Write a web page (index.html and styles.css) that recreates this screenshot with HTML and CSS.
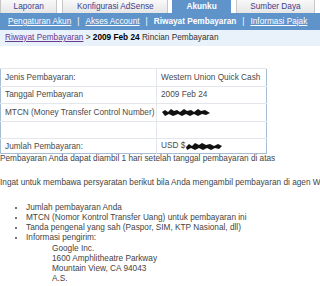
FILE: index.html
```html
<!DOCTYPE html>
<html lang="id">
<head>
    <meta charset="UTF-8">
    <meta name="viewport" content="width=device-width, initial-scale=1.0">
    <title>Rincian Pembayaran</title>
    <link rel="stylesheet" href="styles.css">
</head>
<body>
    <div class="tabs">
        <a href="#" class="tab tab-laporan">Laporan</a>
        <a href="#" class="tab tab-konfig">Konfigurasi AdSense</a>
        <a href="#" class="tab tab-akun active">Akunku</a>
        <a href="#" class="tab tab-sumber">Sumber Daya</a>
    </div>
    <div class="subnav">
        <a href="#">Pengaturan Akun</a><span class="sep">|</span>
        <a href="#">Akses Account</a><span class="sep">|</span>
        <b>Riwayat Pembayaran</b><span class="sep">|</span>
        <a href="#">Informasi Pajak</a>
    </div>
    <div class="crumb">
        <a href="#">Riwayat Pembayaran</a> &gt; <b>2009 Feb 24</b> Rincian Pembayaran
    </div>

    <div class="content">
        <table class="detail">
            <tr><td class="label">Jenis Pembayaran:</td><td>Western Union Quick Cash</td></tr>
            <tr><td class="label">Tanggal Pembayaran</td><td>2009 Feb 24</td></tr>
            <tr><td class="label">MTCN (Money Transfer Control Number)</td>
                <td><svg class="scribble" width="50" height="9" viewBox="0 0 50 9"><path d="M1 4 L4 2 L7 4 L10 1 L13 3 L16 2 L19 4 L23 1 L26 3 L30 2 L33 4 L37 1 L40 3 L44 2 L49 5 L45 7 L41 6 L37 8 L33 6 L29 8 L25 6 L21 8 L17 6 L12 8 L8 6 L4 8 Z" fill="#111"/></svg></td></tr>
            <tr class="blank"><td class="label"></td><td></td></tr>
            <tr class="last"><td class="label">Jumlah Pembayaran:</td>
                <td>USD $<svg class="scribble" width="38" height="9" viewBox="0 0 38 9"><path d="M1 5 L4 2 L7 4 L10 1 L14 3 L17 1 L21 3 L25 2 L29 4 L33 2 L37 4 L34 7 L30 6 L26 8 L22 6 L18 8 L14 6 L10 8 L6 6 L2 8 Z" fill="#111"/></svg></td></tr>
        </table>

        <p class="note">Pembayaran Anda dapat diambil 1 hari setelah tanggal pembayaran di atas</p>
        <p class="note wide">Ingat untuk membawa persyaratan berikut bila Anda mengambil pembayaran di agen Western Union:</p>

        <ul class="reqs">
            <li>Jumlah pembayaran Anda</li>
            <li>MTCN (Nomor Kontrol Transfer Uang) untuk pembayaran ini</li>
            <li>Tanda pengenal yang sah (Paspor, SIM, KTP Nasional, dll)</li>
            <li>Informasi pengirim:
                <div class="address">
                    Google Inc.<br>
                    1600 Amphlitheatre Parkway<br>
                    Mountain View, CA 94043<br>
                    A.S.
                </div>
            </li>
        </ul>
    </div>
</body>
</html>
```

FILE: styles.css
```css
* {
    box-sizing: border-box;
}
html, body {
    overflow: hidden;
}
body {
    margin: 0;
    width: 320px;
    height: 286px;
    background: #fff;
    font-family: "Liberation Sans", Arial, sans-serif;
    font-size: 8.25px;
    color: #444;
}

/* top tabs */
.tabs {
    display: flex;
    height: 13px;
    overflow: hidden;
}
.tab {
    display: block;
    height: 17px;
    margin-top: -4px;
    margin-right: 5px;
    padding-top: 5px;
    text-align: center;
    text-decoration: none;
    color: #40408f;
    background: linear-gradient(#fdfdfd, #e6e6e6);
    border: 1px solid #c6c6c6;
    border-bottom: none;
    border-radius: 5px 5px 0 0;
}
.tab-laporan { width: 58px; }
.tab-konfig { width: 107px; margin-right: 4px; }
.tab-akun { width: 59px; }
.tab-sumber { width: 80px; }
.tab.active {
    background: #5f94cb;
    border-color: #5f94cb;
    color: #fff;
    font-weight: bold;
}

/* sub navigation */
.subnav {
    display: flex;
    align-items: center;
    height: 17px;
    padding-left: 8px;
    background: #5f94cb;
    color: #fff;
    white-space: nowrap;
}
.subnav a {
    color: #fff;
}
.subnav .sep {
    margin: 0 6px;
}

.crumb {
    height: 16px;
    line-height: 16px;
    padding-left: 5px;
    background: #e9f1fa;
    color: #333;
}
.crumb a {
    color: #6a3a8e;
}
.crumb b {
    color: #000;
}

/* details */
.content {
    padding-top: 22px;
}
.detail {
    width: 267px;
    border-collapse: collapse;
    border: 1px solid #a7bdd3;
}
.detail td {
    height: 17.5px;
    padding: 0 0 0 4px;
    border-top: 1px solid #e3e7ec;
    color: #4a4a4a;
    white-space: nowrap;
}
.detail td.label {
    width: 156px;
    border-right: 1px solid #e3e7ec;
}
.detail .last td {
    height: 15px;
}
.scribble {
    vertical-align: middle;
}

.note {
    margin: 0 0 14px;
    line-height: 10.25px;
    white-space: nowrap;
}
.reqs {
    margin: 0;
    padding-left: 26px;
    line-height: 10.25px;
    white-space: nowrap;
}
.address {
    padding-left: 26px;
}
```
